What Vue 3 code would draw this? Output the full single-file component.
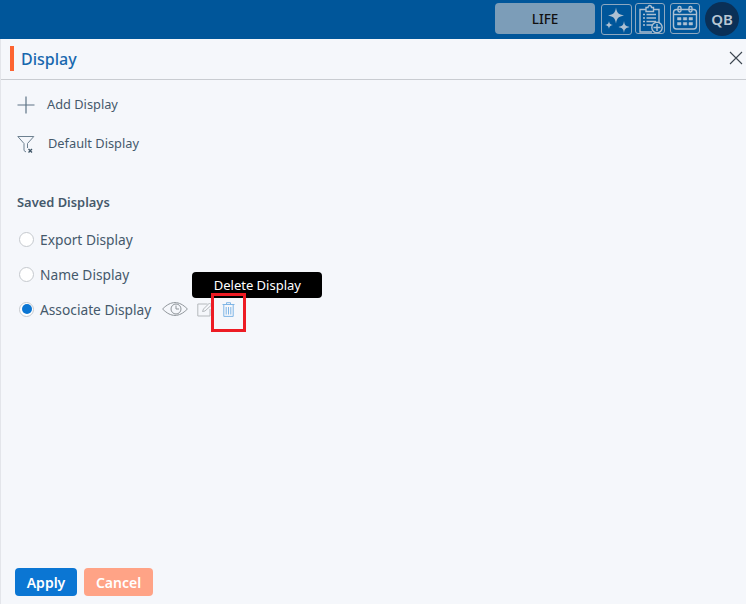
<script setup>
const saved = [
  { name: 'Export Display', on: false },
  { name: 'Name Display', on: false },
  { name: 'Associate Display', on: true },
]
</script>

<template>
  <div class="page">
    <header class="topbar">
      <div class="life">LIFE</div>
      <button class="tool t1">
        <svg viewBox="0 0 29 29" width="29" height="29" fill="#adc0d2">
          <path d="M14 2.500 C15 8 16.500 9.500 22 10.500 C16.500 11.500 15 13 14 18.500 C13 13 11.500 11.500 6 10.500 C11.500 9.500 13 8 14 2.500Z"/>
          <path d="M22 16 C22.500 20 23.500 21 27.500 22 C23.500 23 22.500 24 22 28 C21.500 24 20.500 23 16.500 22 C20.500 21 21.500 20 22 16Z"/>
          <path d="M7 16 C7.400 18.600 8 19.300 11 20 C8 20.700 7.400 21.400 7 24 C6.600 21.400 6 20.700 3 20 C6 19.300 6.600 18.600 7 16Z"/>
        </svg>
      </button>
      <button class="tool t2">
        <svg viewBox="0 0 28 29" width="28" height="29" fill="none" stroke="#adc0d2" stroke-width="1.400">
          <path d="M23 19V5.500H17.500M10 5.500H4V28H16"/>
          <path d="M10 3.500H12C12 0.800 15.500 0.800 15.500 3.500H17.500V7.500H10Z"/>
          <path d="M7 10.500H9M10.500 10.500H20M7 14H9M10.500 14H20M7 17.500H9M10.500 17.500H20M7 21H9M10.500 21H17"/>
          <circle cx="21" cy="23.500" r="5.200"/>
          <path d="M21 20V27M17.500 23.500H24.500"/>
        </svg>
      </button>
      <button class="tool t3">
        <svg viewBox="0 0 28 29" width="28" height="29" fill="none" stroke="#adc0d2" stroke-width="1.400">
          <rect x="2.500" y="5.500" width="23" height="19.500" rx="3"/>
          <path d="M2.500 10.500H25.500"/>
          <rect x="7" y="2.500" width="3" height="5.500" rx="1.400"/>
          <rect x="18" y="2.500" width="3" height="5.500" rx="1.400"/>
          <path d="M6.500 13.500H10V16H6.500ZM12.300 13.500H15.800V16H12.300ZM18 13.500H21.500V16H18ZM6.500 18.500H10V21H6.500ZM12.300 18.500H15.800V21H12.300ZM18 18.500H21.500V21H18Z" fill="#adc0d2" stroke-width="0.500"/>
        </svg>
      </button>
      <div class="avatar">QB</div>
    </header>

    <main class="panel">
      <div class="title-row">
        <span class="accent"></span>
        <h1 class="title">Display</h1>
        <svg class="close" viewBox="0 0 14 14" width="14" height="14" fill="none" stroke="#3c4650" stroke-width="1.100">
          <path d="M1 1L13 13M13 1L1 13"/>
        </svg>
      </div>

      <div class="body">
        <div class="action add">
          <svg viewBox="0 0 18 18" width="18" height="18" fill="none" stroke="#5e7385" stroke-width="1.200">
            <path d="M9 0.500V17.500M0.500 9H17.500"/>
          </svg>
          <span>Add Display</span>
        </div>
        <div class="action def">
          <svg viewBox="0 0 18 18" width="18" height="18" fill="none" stroke="#6d8090" stroke-width="1">
            <path d="M0.800 1.500H16.800L10.500 8.500V13M7 8.500L0.800 1.500M7 8.500V15.500L9 17"/>
            <path d="M11.500 14L15 17.500M15 14L11.500 17.500" stroke="#3e5566" stroke-width="1.300"/>
          </svg>
          <span>Default Display</span>
        </div>

        <h2 class="saved-head">Saved Displays</h2>

        <ul class="saved">
          <li v-for="item in saved" :key="item.name" class="saved-row">
            <span class="radio" :class="{ on: item.on }"></span>
            <span class="saved-name">{{ item.name }}</span>
            <div v-if="item.on" class="row-tools">
              <svg class="eye" viewBox="0 0 26 14" width="26" height="14" fill="none" stroke="#8e9499" stroke-width="1">
                <path d="M0.600 7C5 2.500 9 0.600 13 0.600S21 2.500 25.400 7C21 11.500 17 13.400 13 13.400S5 11.500 0.600 7Z"/>
                <circle cx="14" cy="7" r="5"/>
                <path d="M14 3.500V7H17"/>
              </svg>
              <svg class="edit" viewBox="0 0 15 15" width="15" height="15" fill="none" stroke="#b5b9bd" stroke-width="1">
                <path d="M10.500 2H0.800V14H13V7"/>
                <path d="M5.500 9.500L6.500 7L12.500 1L14.500 3L8 9Z"/>
              </svg>
              <svg class="trash" viewBox="0 0 13 15" width="13" height="15" fill="none" stroke="#7fb5e6" stroke-width="1">
                <path d="M0.500 2.500H12.500M4.500 2.500V0.700H8.500V2.500"/>
                <path d="M1.800 2.500V14.400H11.200V2.500"/>
                <path d="M4.200 5V12.500M6.500 5V12.500M8.800 5V12.500"/>
              </svg>
              <div class="tooltip">Delete Display</div>
              <div class="highlight"></div>
            </div>
          </li>
        </ul>
      </div>

      <footer class="footer">
        <button class="btn apply">Apply</button>
        <button class="btn cancel">Cancel</button>
      </footer>
    </main>
  </div>
</template>

<style scoped>
.page {
  width: 746px;
  height: 604px;
  display: flex;
  flex-direction: column;
  font-family: "Noto Sans", "Open Sans", sans-serif;
  background: #f5f7fb;
  overflow: hidden;
}
.topbar {
  height: 39px;
  flex: none;
  background: #00569a;
  display: flex;
  align-items: flex-start;
  padding: 3px 0 0 495px;
  box-sizing: border-box;
}
.life {
  width: 100px;
  height: 31px;
  flex: none;
  border-radius: 4px;
  background: #7c9db8;
  color: #111;
  font-size: 13.500px;
  font-weight: 500;
  display: flex;
  align-items: center;
  justify-content: center;
}
.tool {
  width: 30px;
  height: 31px;
  flex: none;
  padding: 0;
  background: transparent;
  border: 1px solid #8ea8c0;
  border-radius: 3px;
  display: flex;
  align-items: center;
  justify-content: center;
}
.t1 { width: 31px; margin: 1px 0 0 6px; }
.t2 { margin-left: 3px; }
.t3 { margin-left: 5px; }
.avatar {
  width: 34px;
  height: 34px;
  flex: none;
  margin: -1px 0 0 5px;
  border-radius: 50%;
  background: #0a3057;
  color: #b9c7d4;
  font-size: 15px;
  font-weight: 600;
  display: flex;
  align-items: center;
  justify-content: center;
}
.panel {
  flex: 1;
  display: flex;
  flex-direction: column;
  border-left: 1px solid #e3e5ea;
}
.title-row {
  height: 41px;
  flex: none;
  box-sizing: border-box;
  border-bottom: 1px solid #c9ccd1;
  display: flex;
  align-items: center;
  padding: 0 3px 0 9px;
}
.accent {
  width: 4px;
  height: 25px;
  background: #fd6431;
  margin-top: -1px;
}
.title {
  margin: 0 0 0 7px;
  flex: 1;
  font-size: 16px;
  font-weight: 500;
  color: #1868ae;
}
.close { margin-top: -2px; }
.body {
  flex: 1;
  padding: 0 0 0 16px;
  color: #45596b;
  font-size: 12.800px;
}
.action {
  display: flex;
  align-items: center;
}
.action span { margin: -2px 0 0 12px; }
.add { margin-top: 16px; height: 18px; }
.def { margin-top: 21px; height: 18px; }
.def span { margin-left: 13px; }
.saved-head {
  margin: 40px 0 0;
  font-size: 12.900px;
  font-weight: 600;
  line-height: 18px;
  color: #45596b;
}
.saved {
  list-style: none;
  margin: 18px 0 0;
  padding: 0;
  display: flex;
  flex-direction: column;
  gap: 15px;
}
.saved-row {
  height: 20px;
  display: flex;
  align-items: center;
  font-size: 13.750px;
  color: #45596b;
}
.radio {
  width: 15px;
  height: 15px;
  box-sizing: border-box;
  margin-left: 2px;
  border: 1px solid #c5c9ce;
  border-radius: 50%;
  background: #fff;
  flex: none;
  position: relative;
}
.radio.on::after {
  content: "";
  position: absolute;
  inset: 1.500px;
  border-radius: 50%;
  background: #0b76d3;
}
.saved-name { margin-left: 6px; }
.row-tools {
  position: relative;
  display: flex;
  align-items: center;
  margin-left: 11px;
}
.edit { margin-left: 9px; }
.trash { margin-left: 10px; }
.tooltip {
  position: absolute;
  left: 30px;
  top: -30px;
  width: 130px;
  height: 26px;
  border-radius: 4px;
  background: #000;
  color: #fff;
  font-size: 13px;
  display: flex;
  align-items: center;
  justify-content: center;
}
.highlight {
  position: absolute;
  left: 49px;
  top: -9px;
  width: 35px;
  height: 39px;
  box-sizing: border-box;
  border: 3px solid #ed1c24;
}
.footer {
  flex: none;
  display: flex;
  gap: 7px;
  padding: 0 0 8px 14px;
}
.btn {
  height: 28px;
  border: 0;
  border-radius: 4px;
  color: #fff;
  font-family: inherit;
  font-size: 14px;
  font-weight: 600;
  padding: 0;
}
.apply { width: 62px; background: #0b76d3; }
.cancel { width: 69px; background: #ffa386; }
</style>
